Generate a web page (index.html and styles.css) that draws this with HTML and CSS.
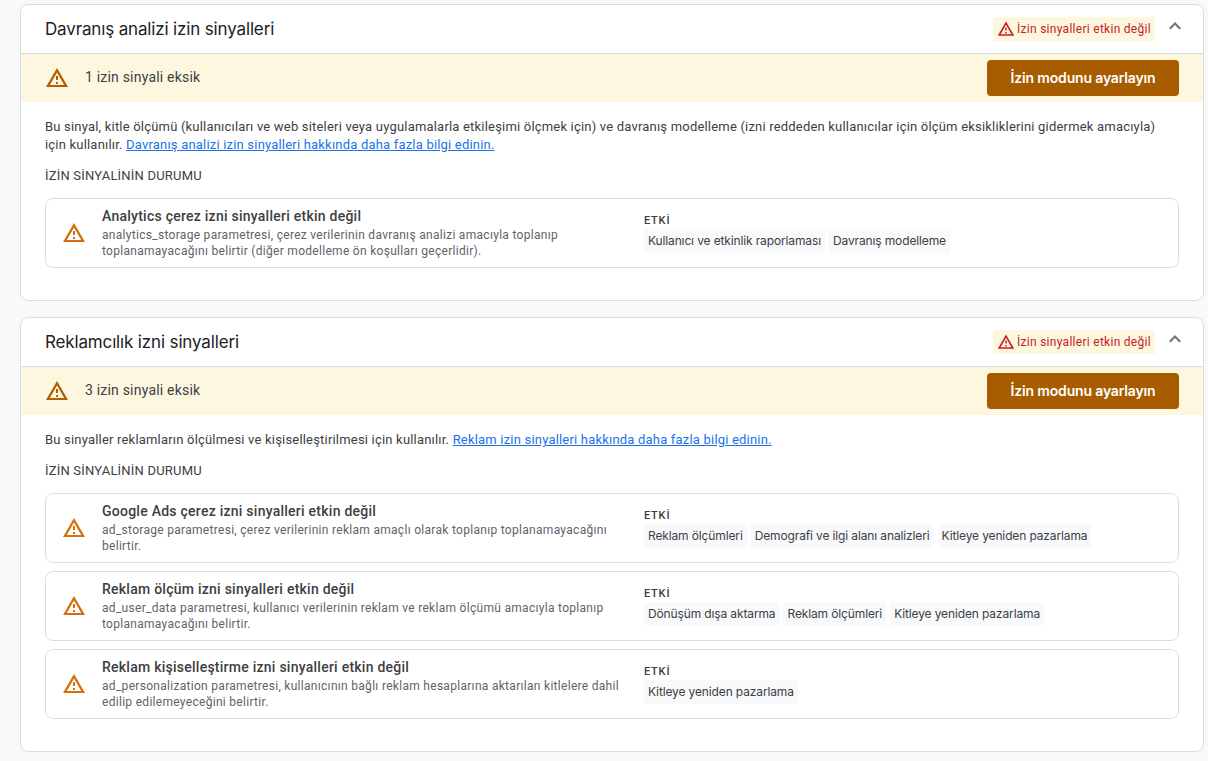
FILE: index.html
```html
<!DOCTYPE html>
<html lang="tr">
<head>
    <title>İzin ayarları</title>
    <meta charset="UTF-8">
    <link rel="stylesheet" href="styles.css">
</head>
<body>
    <svg width="0" height="0" class="sprite">
        <symbol id="warning" viewBox="0 0 24 24">
            <path d="M12 6.4L19.2 19H4.8L12 6.4M12 2L1 21h22L12 2zm1 14h-2v2h2v-2zm0-6h-2v4h2v-4z"/>
        </symbol>
        <symbol id="expand-less" viewBox="0 0 24 24">
            <path d="M12 8l-6 6 1.5 1.5L12 11l4.5 4.5L18 14z"/>
        </symbol>
    </svg>

    <!-- Davranış analizi -->
    <div class="card">
        <div class="card-header">
            <h2>Davranış analizi izin sinyalleri</h2>
            <span class="badge"><svg class="badge-icon"><use href="#warning"/></svg>İzin sinyalleri etkin değil</span>
            <svg class="icon chevron"><use href="#expand-less"/></svg>
        </div>
        <div class="banner">
            <svg class="icon"><use href="#warning"/></svg>
            <span class="banner-text">1 izin sinyali eksik</span>
            <button class="btn">İzin modunu ayarlayın</button>
        </div>
        <div class="card-body">
            <p class="desc">Bu sinyal, kitle ölçümü (kullanıcıları ve web siteleri veya uygulamalarla etkileşimi ölçmek için) ve davranış modelleme (izni reddeden kullanıcılar için ölçüm eksikliklerini gidermek amacıyla)<br>için kullanılır. <a href="#">Davranış analizi izin sinyalleri hakkında daha fazla bilgi edinin.</a></p>
            <h3>İZİN SİNYALİNİN DURUMU</h3>
            <div class="signal">
                <svg class="icon"><use href="#warning"/></svg>
                <div class="signal-info">
                    <h4>Analytics çerez izni sinyalleri etkin değil</h4>
                    <p>analytics_storage parametresi, çerez verilerinin davranış analizi amacıyla toplanıp<br>toplanamayacağını belirtir (diğer modelleme ön koşulları geçerlidir).</p>
                </div>
                <div class="impact">
                    <h5>ETKİ</h5>
                    <div class="chips">
                        <span class="chip">Kullanıcı ve etkinlik raporlaması</span>
                        <span class="chip">Davranış modelleme</span>
                    </div>
                </div>
            </div>
        </div>
    </div>

    <!-- Reklamcılık -->
    <div class="card">
        <div class="card-header">
            <h2>Reklamcılık izni sinyalleri</h2>
            <span class="badge"><svg class="badge-icon"><use href="#warning"/></svg>İzin sinyalleri etkin değil</span>
            <svg class="icon chevron"><use href="#expand-less"/></svg>
        </div>
        <div class="banner">
            <svg class="icon"><use href="#warning"/></svg>
            <span class="banner-text">3 izin sinyali eksik</span>
            <button class="btn">İzin modunu ayarlayın</button>
        </div>
        <div class="card-body">
            <p class="desc">Bu sinyaller reklamların ölçülmesi ve kişiselleştirilmesi için kullanılır. <a href="#">Reklam izin sinyalleri hakkında daha fazla bilgi edinin.</a></p>
            <h3>İZİN SİNYALİNİN DURUMU</h3>
            <div class="signal">
                <svg class="icon"><use href="#warning"/></svg>
                <div class="signal-info">
                    <h4>Google Ads çerez izni sinyalleri etkin değil</h4>
                    <p>ad_storage parametresi, çerez verilerinin reklam amaçlı olarak toplanıp toplanamayacağını<br>belirtir.</p>
                </div>
                <div class="impact">
                    <h5>ETKİ</h5>
                    <div class="chips">
                        <span class="chip">Reklam ölçümleri</span>
                        <span class="chip">Demografi ve ilgi alanı analizleri</span>
                        <span class="chip">Kitleye yeniden pazarlama</span>
                    </div>
                </div>
            </div>
            <div class="signal">
                <svg class="icon"><use href="#warning"/></svg>
                <div class="signal-info">
                    <h4>Reklam ölçüm izni sinyalleri etkin değil</h4>
                    <p>ad_user_data parametresi, kullanıcı verilerinin reklam ve reklam ölçümü amacıyla toplanıp<br>toplanamayacağını belirtir.</p>
                </div>
                <div class="impact">
                    <h5>ETKİ</h5>
                    <div class="chips">
                        <span class="chip">Dönüşüm dışa aktarma</span>
                        <span class="chip">Reklam ölçümleri</span>
                        <span class="chip">Kitleye yeniden pazarlama</span>
                    </div>
                </div>
            </div>
            <div class="signal">
                <svg class="icon"><use href="#warning"/></svg>
                <div class="signal-info">
                    <h4>Reklam kişiselleştirme izni sinyalleri etkin değil</h4>
                    <p>ad_personalization parametresi, kullanıcının bağlı reklam hesaplarına aktarılan kitlelere dahil<br>edilip edilemeyeceğini belirtir.</p>
                </div>
                <div class="impact">
                    <h5>ETKİ</h5>
                    <div class="chips">
                        <span class="chip">Kitleye yeniden pazarlama</span>
                    </div>
                </div>
            </div>
        </div>
    </div>
</body>
</html>
```

FILE: styles.css
```css
* {
    box-sizing: border-box;
}
body {
    margin: 0;
    padding: 4px 4px 0 20px;
    background-color: #f8f9fb;
    font-family: Roboto, "Liberation Sans", sans-serif;
    color: #3c4043;
}
h2, h3, h4, h5, p {
    margin: 0;
    font-weight: 400;
}
.sprite {
    display: none;
}
.card {
    background-color: #fff;
    border: 1px solid #dadce0;
    border-radius: 8px;
    overflow: hidden;
}
.card + .card {
    margin-top: 16px;
}
.card-header {
    display: flex;
    align-items: center;
    height: 49px;
    padding: 0 16px 0 24px;
    border-bottom: 1px solid #dadce0;
}
.card-header h2 {
    margin-right: auto;
    font-family: Inter, Roboto, sans-serif;
    font-size: 17px;
    line-height: 24px;
    letter-spacing: -0.15px;
    color: #202124;
}
.icon {
    width: 24px;
    height: 24px;
    flex: none;
}
.badge {
    display: flex;
    align-items: center;
    width: 162px;
    height: 24px;
    padding-left: 4px;
    margin-right: 8px;
    border-radius: 2px;
    background-color: #fef7e0;
    color: #c5221f;
    fill: #c5221f;
    font-size: 12px;
    letter-spacing: 0.28px;
    white-space: nowrap;
}
.badge-icon {
    width: 18px;
    height: 18px;
    margin-right: 2px;
}
.chevron {
    fill: #757575;
    margin-bottom: 6px;
}
.banner {
    display: flex;
    align-items: center;
    height: 48px;
    padding: 0 24px;
    background-color: #fef7e0;
    fill: #b06000;
}
.banner-text {
    margin-left: 16px;
    margin-right: auto;
    padding-bottom: 2px;
    font-size: 14px;
    letter-spacing: 0.2px;
}
.btn {
    width: 192px;
    height: 36px;
    padding: 0 0 1px;
    border: none;
    border-radius: 4px;
    background-color: #a85c00;
    color: #fff;
    font-family: Inter, Roboto, sans-serif;
    font-size: 14px;
    font-weight: 600;
    letter-spacing: -0.16px;
    white-space: nowrap;
}
.card-body {
    padding: 16px 24px 32px;
}
.desc {
    font-size: 13px;
    line-height: 18px;
    letter-spacing: 0.195px;
    white-space: nowrap;
}
.desc a {
    color: #1a73e8;
    text-decoration: underline;
}
h3 {
    margin: 13px 0;
    font-size: 13px;
    line-height: 18px;
    letter-spacing: 0.2px;
}
.signal {
    display: flex;
    align-items: center;
    height: 70px;
    padding-left: 16px;
    border: 1px solid #dadce0;
    border-radius: 8px;
}
.signal + .signal {
    margin-top: 8px;
}
.signal .icon {
    fill: #d56e0c;
}
.signal-info {
    width: 542px;
    margin-left: 16px;
}
h4 {
    padding-bottom: 2px;
    font-size: 14px;
    font-weight: 500;
    line-height: 18px;
    letter-spacing: 0.25px;
}
.signal p {
    font-size: 12px;
    line-height: 16px;
    letter-spacing: 0.295px;
    color: #5f6368;
    white-space: nowrap;
}
h5 {
    font-size: 11px;
    font-weight: 500;
    line-height: 16px;
    letter-spacing: 0.8px;
}
.chips {
    display: flex;
    gap: 4px;
}
.chip {
    height: 24px;
    padding: 0 4px;
    border-radius: 2px;
    background-color: #f8f9fb;
    font-family: Inter, Roboto, sans-serif;
    font-size: 12px;
    line-height: 24px;
    letter-spacing: -0.13px;
    white-space: nowrap;
}
```
